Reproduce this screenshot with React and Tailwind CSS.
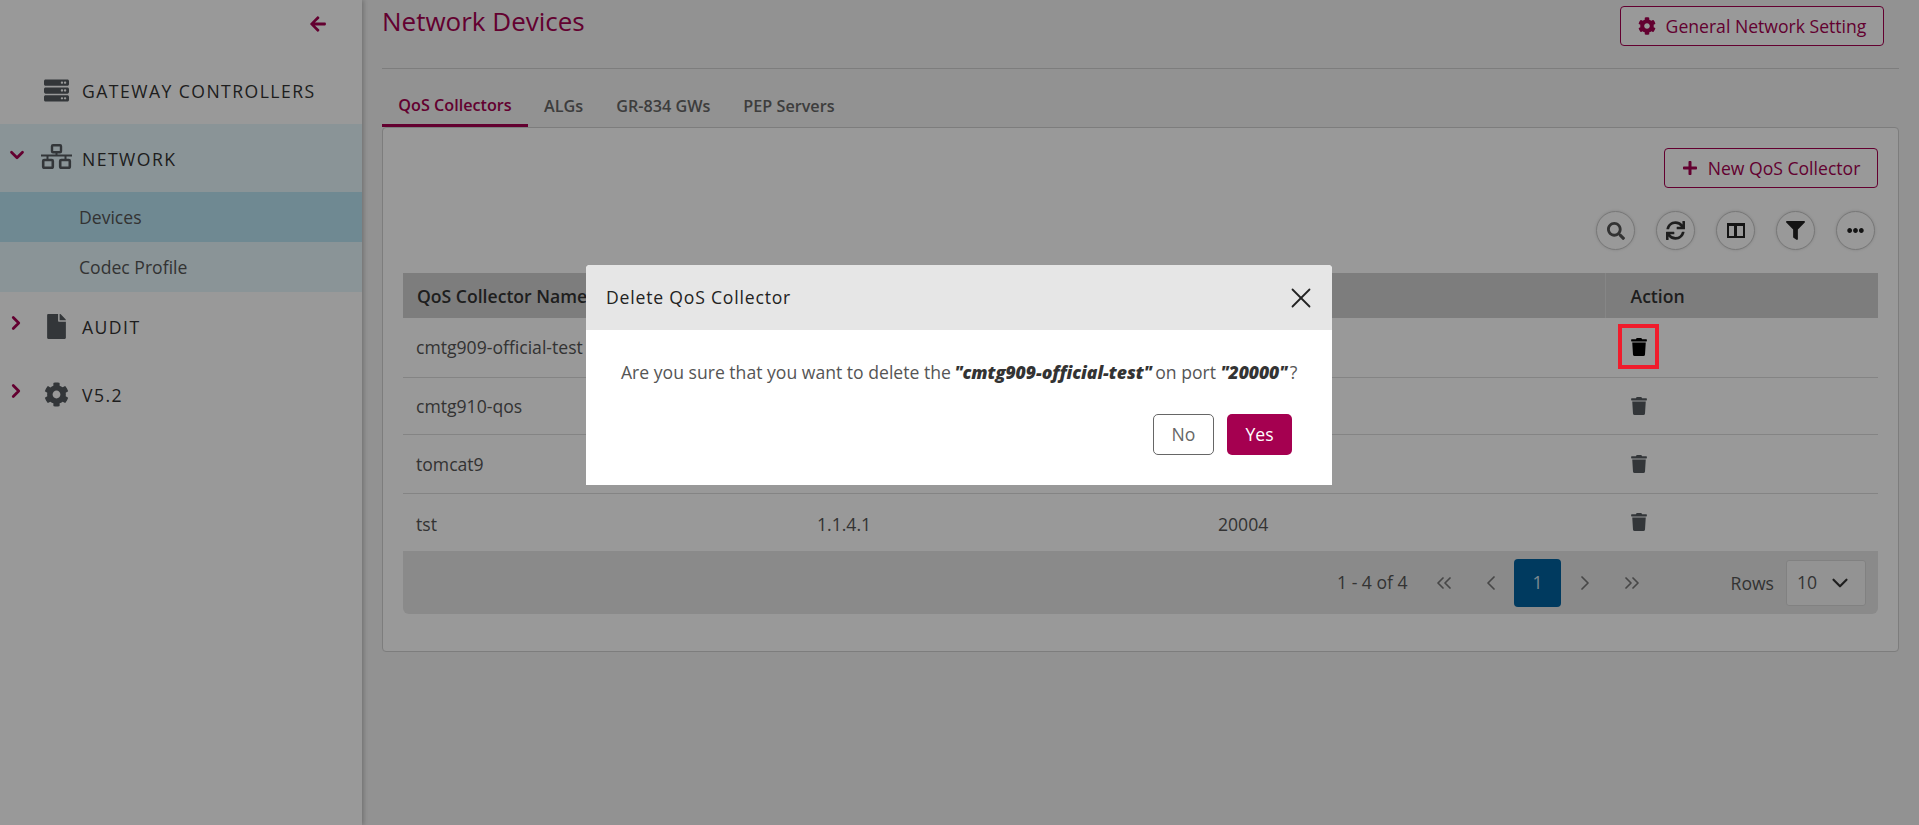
import React from 'react';
import { ChevronDown, ChevronRight, ChevronLeft, ChevronsLeft, ChevronsRight, X } from 'lucide-react';
import { FaArrowLeft, FaServer, FaFile, FaCog, FaPlus, FaSearch, FaSync, FaFilter, FaEllipsisH, FaTrash } from 'react-icons/fa';

const rows = [
  { name: 'cmtg909-official-test', ip: '', port: '', height: 'h-[59px]', pad: '', active: true },
  { name: 'cmtg910-qos', ip: '', port: '', height: 'h-[57px]', pad: 'pt-[2px]' },
  { name: 'tomcat9', ip: '', port: '', height: 'h-[59px]', pad: 'pt-[2px]' },
  { name: 'tst', ip: '1.1.4.1', port: '20004', height: 'h-[58px]', pad: 'pt-[3px]', last: true },
];

const NetworkIcon = () => {
  return (
    <svg width="31" height="25" viewBox="0 0 31 25" fill="none" stroke="currentColor" className="-mt-[3px]">
      <rect x="11" y="1.2" width="9" height="7" rx="1" strokeWidth="2.4" />
      <path d="M15.5 8v3.5M0 11.5h31M6.5 11.5V16M24.5 11.5V16" strokeWidth="2" />
      <rect x="2.2" y="16" width="9.6" height="7.8" rx="1" strokeWidth="2.6" />
      <rect x="19.2" y="16" width="9.6" height="7.8" rx="1" strokeWidth="2.6" />
    </svg>
  );
};

const NavRow = ({ icon, label, open, collapsed }) => {
  return (
    <div className={`flex items-center h-[68px] relative ${open ? 'bg-[#e6f7fc]' : ''}`}>
      <div className="w-[40px] pl-[6px] shrink-0 text-[#a50050] -mt-[6px]">
        {open && <ChevronDown size={22} strokeWidth={3} />}
        {collapsed && <ChevronRight size={22} strokeWidth={3} className="-ml-[1px]" />}
      </div>
      <div className="w-[32px] flex justify-center text-[#555b60] shrink-0">{icon}</div>
      <span className="ml-[10px] pt-[2px] text-[17.6px] font-medium tracking-[1.45px] text-[#333] uppercase">{label}</span>
    </div>
  );
};

const RoundButton = ({ children }) => {
  return (
    <button className="w-[39px] h-[39px] rounded-full border border-[#c8c8c8] shadow-[0_0_3px_rgba(0,0,0,0.15)] bg-white flex items-center justify-center text-[#555]">
      {children}
    </button>
  );
};

const OutlineButton = ({ icon, label, className }) => {
  return (
    <button className={`flex items-center justify-center gap-[10px] h-[40px] border border-[#a50050] rounded-[4px] bg-white text-[#a50050] text-[17.6px] ${className}`}>
      {icon}
      {label}
    </button>
  );
};

const Sidebar = () => {
  return (
    <aside className="w-[362px] shrink-0 bg-white shadow-[2px_0_4px_rgba(0,0,0,0.2)] z-10 relative">
      <div className="h-[56px] flex justify-end pr-[35px] pt-[15px] text-[#a50050]">
        <FaArrowLeft size={18} />
      </div>
      <NavRow icon={<FaServer size={25} />} label="Gateway Controllers" />
      <NavRow icon={<NetworkIcon />} label="Network" open />
      <div className="h-[50px] bg-[#b9e4f3] flex items-center pl-[79px] text-[17.6px] text-[#555]">Devices</div>
      <div className="h-[50px] bg-[#e6f7fc] flex items-center pl-[79px] text-[17.6px] text-[#555]">Codec Profile</div>
      <NavRow icon={<FaFile size={25} />} label="Audit" collapsed />
      <NavRow icon={<FaCog size={25} />} label="V5.2" collapsed />
    </aside>
  );
};

const DataTable = () => {
  return (
    <div className="mt-[23px]">
      <table className="w-full table-fixed border-collapse text-[17.6px] text-[#555]">
        <colgroup>
          <col className="w-[400px]" />
          <col className="w-[401px]" />
          <col className="w-[401px]" />
          <col />
        </colgroup>
        <thead>
          <tr className="h-[45px] bg-[#d0d0d0] text-[#333] text-left">
            <th className="font-semibold pl-[14px] pt-[1px]">QoS Collector Name</th>
            <th className="font-semibold pl-[14px]"></th>
            <th className="font-semibold pl-[14px]"></th>
            <th className="font-semibold pl-[25px] pt-[1px] border-l border-[#e0e0e0]">Action</th>
          </tr>
        </thead>
        <tbody>
          {rows.map((row) => (
            <tr key={row.name} className={`${row.height} ${row.last ? '' : 'border-b border-[#dcdcdc]'}`}>
              <td className={`pl-[13px] ${row.pad}`}>{row.name}</td>
              <td className={`pl-[14px] ${row.pad}`}>{row.ip}</td>
              <td className={`pl-[14px] ${row.pad}`}>{row.port}</td>
              <td className="pl-[25px]">
                <span className="relative inline-block align-middle -mt-[4px]">
                  <FaTrash size={18} className={row.active ? 'text-black' : 'text-[#555b60]'} />
                  {row.active && (
                    <span className="absolute -left-[12px] -top-[14px] w-[41px] h-[45px] border-[4px] border-[#f01c2c] z-50"></span>
                  )}
                </span>
              </td>
            </tr>
          ))}
        </tbody>
      </table>
      <div className="h-[63px] bg-[#e6e6e6] rounded-b-[6px] flex items-center pr-[12px] text-[17.6px] text-[#555]">
        <span className="ml-[934px] w-[74px] whitespace-nowrap">1 - 4 of 4</span>
        <div className="ml-[9px] flex items-center text-[#777]">
          <span className="w-[47px] flex justify-center"><ChevronsLeft size={24} strokeWidth={1.75} /></span>
          <span className="w-[47px] flex justify-center"><ChevronLeft size={24} strokeWidth={1.75} /></span>
          <span className="w-[47px] h-[48px] rounded-[4px] bg-[#00619f] text-[#cfe3f0] flex items-center justify-center">1</span>
          <span className="w-[47px] flex justify-center"><ChevronRight size={24} strokeWidth={1.75} /></span>
          <span className="w-[47px] flex justify-center"><ChevronsRight size={24} strokeWidth={1.75} /></span>
        </div>
        <span className="ml-auto pt-[1px]">Rows</span>
        <div className="ml-[12px] w-[80px] h-[46px] bg-[#f5f5f5] border border-[#d8d8d8] rounded-[3px] flex items-center justify-between pl-[10px] pr-[12px]">
          <span>10</span>
          <ChevronDown size={26} strokeWidth={2} className="text-[#333]" />
        </div>
      </div>
    </div>
  );
};

const DeleteDialog = () => {
  return (
    <div className="fixed inset-0 bg-black/40 z-40 flex justify-center items-start pt-[265px]">
      <div className="w-[746px] h-[220px] mr-[1px] bg-white rounded-t-[4px] overflow-hidden">
        <div className="h-[65px] bg-[#e6e6e6] flex items-center justify-between pl-[20px] pr-[14px]">
          <span className="text-[17.6px] font-medium tracking-[0.8px] text-[#222]">Delete QoS Collector</span>
          <X size={34} strokeWidth={1.25} className="text-[#222]" />
        </div>
        <div className="pl-[35px] pt-[30px] text-[17.6px] leading-[24px] text-[#555] whitespace-nowrap">
          Are you sure that you want to delete the <b className="italic font-extrabold tracking-[-0.05px] text-[#333] -ml-[1px] -mr-[1px]">"cmtg909-official-test"</b> on port <b className="italic font-extrabold tracking-[-0.05px] text-[#333] -mr-[2px]">"20000"</b> ?
        </div>
        <div className="mt-[30px] flex justify-end gap-[13px] pr-[40px]">
          <button className="w-[61px] h-[41px] border border-[#666] rounded-[5px] text-[17.6px] text-[#666]">No</button>
          <button className="w-[65px] h-[41px] bg-[#a50050] rounded-[5px] text-[17.6px] font-medium text-white">Yes</button>
        </div>
      </div>
    </div>
  );
};

const App = () => {
  return (
    <div className="h-screen flex overflow-hidden bg-[#f3f3f3] font-['Open_Sans',sans-serif]">
      <Sidebar />
      <main className="flex-1 px-[20px]">
        <div className="h-[69px] flex justify-between items-start border-b border-[#d0d0d0]">
          <h1 className="text-[26px] leading-[43px] font-medium text-[#a50050]">Network Devices</h1>
          <OutlineButton
            icon={<FaCog size={18} />}
            label="General Network Setting"
            className="w-[264px] mt-[6px] mr-[15px]"
          />
        </div>
        <div className="h-[58px] flex items-end text-[16.2px] font-semibold text-[#666]">
          <span className="w-[146px] h-[43px] pt-[2px] flex items-center justify-center border-b-[3px] border-[#a50050] text-[#a50050]">QoS Collectors</span>
          <span className="ml-[16px] h-[43px] flex items-center pt-[1px]">ALGs</span>
          <span className="ml-[33px] h-[43px] flex items-center pt-[1px]">GR-834 GWs</span>
          <span className="ml-[33px] h-[43px] flex items-center pt-[1px]">PEP Servers</span>
        </div>
        <section className="h-[525px] bg-white border border-[#d0d0d0] rounded-[4px] px-[20px] pt-[20px]">
          <div className="flex justify-end">
            <OutlineButton icon={<FaPlus size={16} />} label="New QoS Collector" className="w-[214px]" />
          </div>
          <div className="flex justify-end gap-[21px] pr-[3px] mt-[23px]">
            <RoundButton><FaSearch size={18} /></RoundButton>
            <RoundButton><FaSync size={19} className="text-[#333]" /></RoundButton>
            <RoundButton>
              <span className="w-[18px] h-[15px] border-[2.5px] border-t-[3px] border-[#222] flex justify-center">
                <span className="w-[2.5px] bg-[#222]"></span>
              </span>
            </RoundButton>
            <RoundButton><FaFilter size={19} className="text-[#222]" /></RoundButton>
            <RoundButton><FaEllipsisH size={17} className="text-[#222]" /></RoundButton>
          </div>
          <DataTable />
        </section>
      </main>
      <DeleteDialog />
    </div>
  );
};

export default App;
